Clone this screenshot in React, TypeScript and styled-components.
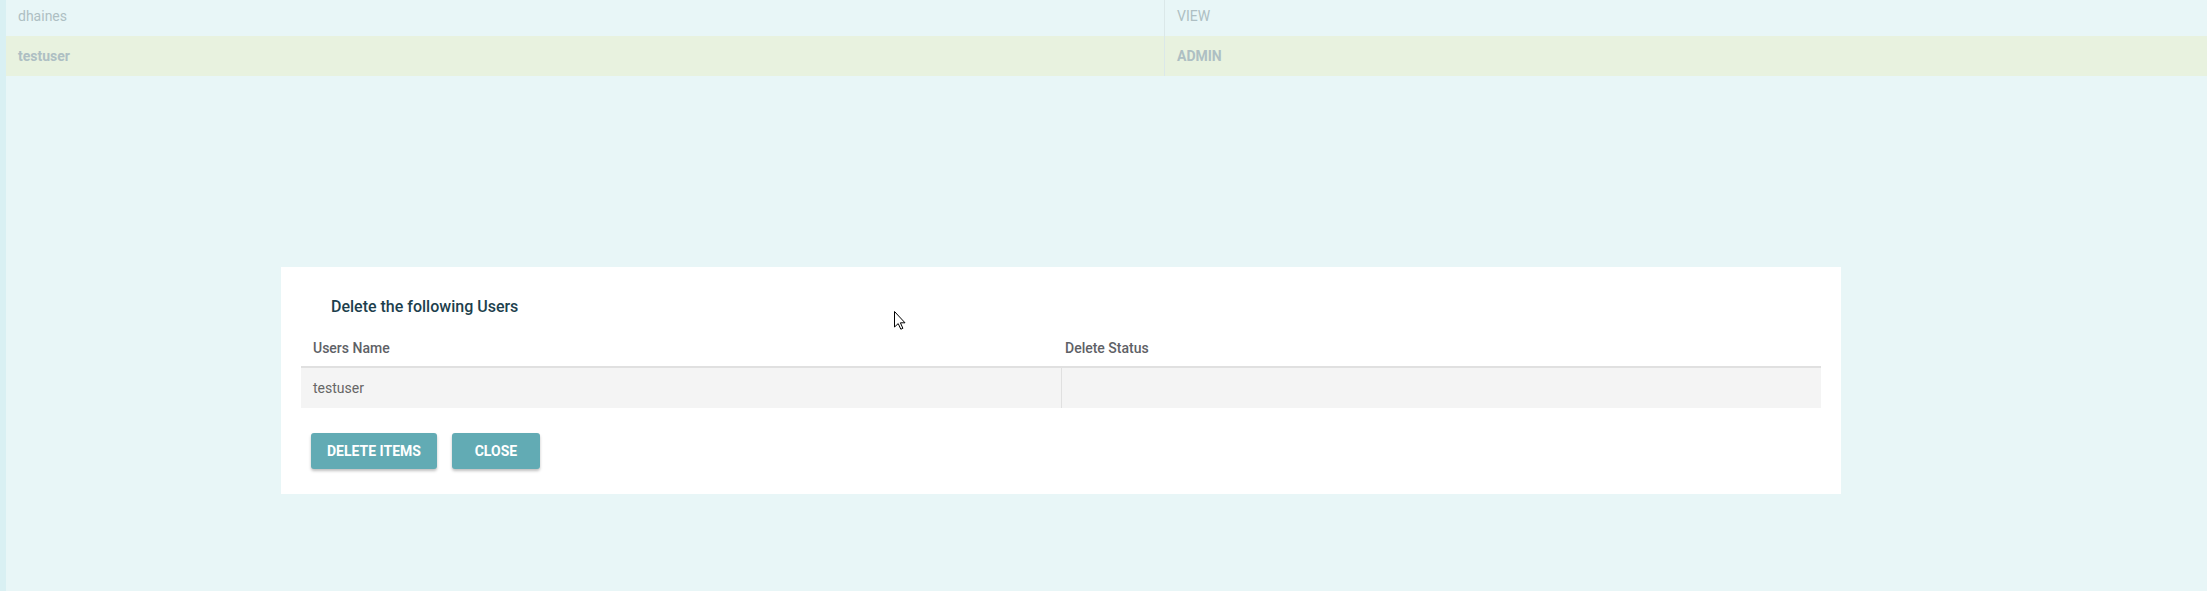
import React from "react";
import styled, { createGlobalStyle } from "styled-components";

const GlobalStyle = createGlobalStyle`
  html, body {
    margin: 0;
    padding: 0;
    background: #e8f6f7;
    font-family: Roboto, "Liberation Sans", Arial, sans-serif;
  }
  * { box-sizing: border-box; }
`;

const Page = styled.div`
  position: relative;
  display: flex;
  min-height: 100vh;
  overflow: hidden;
`;

const SideStrip = styled.div`
  width: 6px;
  flex: none;
  background: #d9f0f3;
`;

const Main = styled.div`
  flex: 1;
  display: flex;
  flex-direction: column;
  min-width: 0;
`;

/* background list of users, dimmed behind the dialog */
const UserList = styled.div`
  margin-top: -4px;
  display: flex;
  flex-direction: column;
`;

const UserRow = styled.div<{ $selected?: boolean }>`
  display: grid;
  grid-template-columns: 1158px 1fr;
  height: 40px;
  background: ${(p) => (p.$selected ? "#e8f2df" : "transparent")};
  color: #aebfc3;
  font-size: 14px;
  font-weight: ${(p) => (p.$selected ? 700 : 400)};
`;

const UserCell = styled.div<{ $divided?: boolean }>`
  display: flex;
  align-items: center;
  padding: 0 12px;
  border-left: ${(p) => (p.$divided ? "1px solid #dbe8e9" : "none")};
`;

const Dialog = styled.section`
  margin: 191px 0 0 275px;
  width: 1560px;
  background: #ffffff;
  padding: 0 20px 25px;
`;

const DialogTitle = styled.h2`
  margin: 0;
  padding: 30px 0 0 30px;
  font-size: 16px;
  line-height: 19px;
  font-weight: 500;
  color: #1d3f4d;
`;

const Table = styled.div`
  display: flex;
  flex-direction: column;
`;

const HeaderRow = styled.div`
  display: grid;
  grid-template-columns: 752px 1fr;
  border-bottom: 2px solid #e0e0e0;
`;

const HeaderCell = styled.div`
  padding: 24px 12px 10px;
  font-size: 14px;
  line-height: 16px;
  font-weight: 500;
  color: #5e6166;
`;

const BodyRow = styled.div`
  display: grid;
  grid-template-columns: 760px 1fr;
  height: 40px;
  background: #f4f4f4;
`;

const BodyCell = styled.div<{ $divided?: boolean }>`
  display: flex;
  align-items: center;
  padding: 0 12px;
  font-size: 14px;
  color: #666666;
  border-left: ${(p) => (p.$divided ? "1px solid #e0e0e0" : "none")};
`;

const Actions = styled.div`
  display: flex;
  gap: 15px;
  margin-top: 25px;
  padding-left: 10px;
`;

const ActionButton = styled.button`
  min-width: 88px;
  height: 36px;
  padding: 0 16px;
  border: none;
  border-radius: 3px;
  background: #62abb4;
  color: #ffffff;
  font-family: Roboto, "Liberation Sans", Arial, sans-serif;
  font-size: 14px;
  font-weight: 700;
  text-transform: uppercase;
  box-shadow: 0 2px 3px rgba(0, 0, 0, 0.25);
  cursor: pointer;
`;

const Pointer = styled.svg`
  position: absolute;
  left: 894px;
  top: 311px;
  width: 12px;
  height: 19px;
  pointer-events: none;
`;

const users = [
  { name: "dhaines", role: "VIEW", selected: false },
  { name: "testuser", role: "ADMIN", selected: true },
];

export default function App() {
  return (
    <>
      <GlobalStyle />
      <Page>
        <SideStrip />
        <Main>
          <UserList>
            {users.map((u) => (
              <UserRow key={u.name} $selected={u.selected}>
                <UserCell>{u.name}</UserCell>
                <UserCell $divided>{u.role}</UserCell>
              </UserRow>
            ))}
          </UserList>

          <Dialog>
            <DialogTitle>Delete the following Users</DialogTitle>
            <Table>
              <HeaderRow>
                <HeaderCell>Users Name</HeaderCell>
                <HeaderCell>Delete Status</HeaderCell>
              </HeaderRow>
              <BodyRow>
                <BodyCell>testuser</BodyCell>
                <BodyCell $divided />
              </BodyRow>
            </Table>
            <Actions>
              <ActionButton>Delete Items</ActionButton>
              <ActionButton>Close</ActionButton>
            </Actions>
          </Dialog>
        </Main>
        <Pointer viewBox="0 0 12 19">
          <path
            d="M0.5 0.5 L0.5 16 L4.2 12.6 L6.8 18.2 L8.9 17.3 L6.4 11.8 L11 11.8 Z"
            fill="#ffffff"
            stroke="#000000"
            strokeWidth="1"
            strokeLinejoin="miter"
          />
        </Pointer>
      </Page>
    </>
  );
}
